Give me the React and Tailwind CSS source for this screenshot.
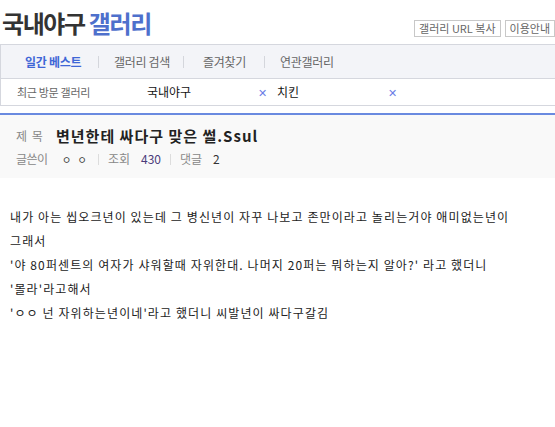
import React from "react";

const font = { fontFamily: '"Noto Sans CJK KR", "Noto Sans", sans-serif' };

export default function App() {
  const lines = [
    "내가 아는 씹오크년이 있는데 그 병신년이 자꾸 나보고 존만이라고 놀리는거야 애미없는년이",
    "그래서",
    "'야 80퍼센트의 여자가 샤워할때 자위한대. 나머지 20퍼는 뭐하는지 알아?' 라고 했더니",
    "'몰라'라고해서",
    "'ㅇㅇ 넌 자위하는년이네'라고 했더니 씨발년이 싸다구갈김",
  ];

  return (
    <div className="w-[555px] h-[427px] bg-white overflow-hidden" style={font}>
      {/* top */}
      <div className="flex items-end justify-between h-[44px] pb-[6px]">
        <h1 className="ml-[2px] text-[24px] font-bold leading-[30px] tracking-[-1.4px] text-[#333] whitespace-nowrap">
          국내야구 <span className="text-[#4e70cc]">갤러리</span>
        </h1>
        <div className="flex gap-[4px] mb-px whitespace-nowrap">
          <button className="h-[17px] px-[4px] border border-[#c8c8c8] bg-white text-[11px] leading-[15px] text-[#666]">
            갤러리 URL 복사
          </button>
          <button className="h-[17px] px-[4px] border border-[#c8c8c8] bg-white text-[11px] leading-[15px] text-[#666]">
            이용안내
          </button>
        </div>
      </div>

      {/* nav */}
      <div className="border-t border-l border-[#d5d7de]">
        <div className="h-[34px] bg-[#f3f4f8] flex items-center text-[12px] text-[#666] border-b border-[#d5d7de] whitespace-nowrap">
          <span className="ml-[24px] w-[73px] font-bold text-[#3f66d6] tracking-[-0.3px]">일간 베스트</span>
          <span className="h-[12px] w-px bg-[#d4d6dc]" />
          <span className="ml-[15px] w-[69px] tracking-[-0.3px]">갤러리 검색</span>
          <span className="h-[12px] w-px bg-[#d4d6dc]" />
          <span className="ml-[19px] w-[61px] tracking-[-0.3px]">즐겨찾기</span>
          <span className="h-[12px] w-px bg-[#d4d6dc]" />
          <span className="ml-[15px] tracking-[-0.3px]">연관갤러리</span>
        </div>
        <div className="h-[27px] flex items-center border-b border-[#d5d7de] text-[12px] whitespace-nowrap">
          <span className="ml-[16px] w-[130px] text-[11px] text-[#666] tracking-[-0.3px]">최근 방문 갤러리</span>
          <span className="w-[111px] text-[#111]">국내야구</span>
          <span className="w-[19px] text-[#6b7ee6] text-[11px]">✕</span>
          <span className="w-[111px] text-[#111]">치킨</span>
          <span className="text-[#6b7ee6] text-[11px]">✕</span>
        </div>
      </div>

      {/* post header */}
      <div className="mt-[7px] border-t-2 border-[#6a8ae0] bg-[#f9f9f9] h-[65px] pl-[16px] pt-[10px] whitespace-nowrap">
        <div className="flex items-center h-[22px]">
          <span className="w-[40px] text-[12px] text-[#888] tracking-[1px]">제 목</span>
          <span className="text-[15px] font-bold text-[#222] tracking-[1px]">변년한테 싸다구 맞은 썰.Ssul</span>
        </div>
        <div className="flex items-center h-[22px] mt-px text-[12px]">
          <span className="w-[46px] text-[#888] tracking-[-0.5px]">글쓴이</span>
          <span className="w-[36px] text-[#333] text-[10px] tracking-[2px]">ㅇ ㅇ</span>
          <span className="h-[11px] w-px bg-[#ddd]" />
          <span className="ml-[9px] w-[33px] text-[#888]">조회</span>
          <span className="w-[29px] text-[#4a3b7a]">430</span>
          <span className="h-[11px] w-px bg-[#ddd]" />
          <span className="ml-[9px] w-[33px] text-[#888]">댓글</span>
          <span className="text-[#333]">2</span>
        </div>
      </div>

      {/* body */}
      <div className="pl-[10px] pt-[27px] text-[12px] text-[#222] leading-[24px] tracking-[1.1px] whitespace-nowrap">
        {lines.map((l, i) => (
          <p key={i}>{l}</p>
        ))}
      </div>
    </div>
  );
}
